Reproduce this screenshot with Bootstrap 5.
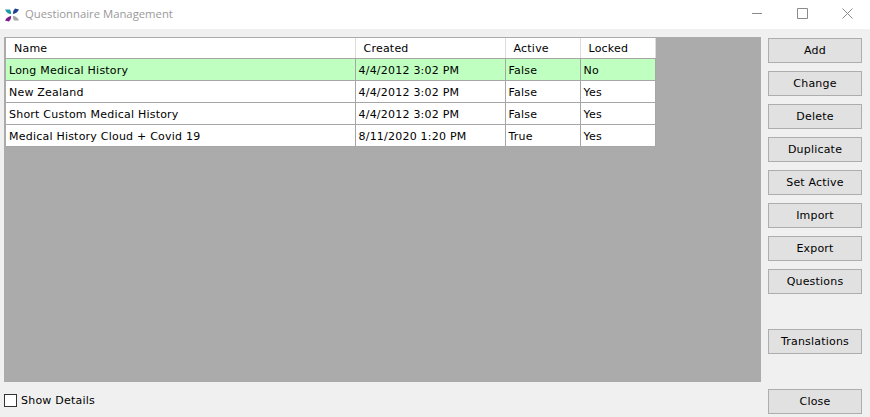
<!DOCTYPE html>
<html lang="en">
<head>
<meta charset="utf-8">
<title>Questionnaire Management</title>
<link href="https://cdn.jsdelivr.net/npm/bootstrap@5.3.0/dist/css/bootstrap.min.css" rel="stylesheet">
<style>
html,body{width:870px;height:417px;overflow:hidden;background:#f0f0f0;margin:0}
body{font-family:"DejaVu Sans",sans-serif;font-size:11px;color:#000;letter-spacing:.22px}
.win-title{height:29px;background:#fff;padding-left:4px}
.win-name{font-family:"Open Sans","Noto Sans",sans-serif;font-size:11.3px;color:#9a9a9a;margin-left:5px;letter-spacing:0}
.win-ctl{width:45px;height:29px;padding-bottom:2px}
.win-body{height:388px;padding:8px 8px 0 4px}
.grid-pane{width:757px;height:345px;flex:none;background:#ababab;padding:1px 0 0 2px}
.q-table{width:649px;table-layout:fixed;border-collapse:collapse;background:#fff;margin:0}
.q-table th,.q-table td{font-weight:400;font-size:11px;line-height:14px;height:22px;padding:3px 0 0 3px;border:1px solid #a6a6a6;border-top:0;border-left:0;vertical-align:middle;color:#000;white-space:nowrap;overflow:hidden;background:#fff}
.q-table th{height:20px;padding-left:8px;padding-top:2px;border-right-color:#ddd}
.q-table tr.picked td{background:#bfffbf}
.side{width:94px;margin-left:7px;margin-top:1px;height:376px}
.tool-btn{display:block;width:94px;height:25px;padding:0;background:#e1e1e1;border:1px solid #adadad;border-radius:0;font-size:11px;line-height:22px;color:#000;font-family:"DejaVu Sans",sans-serif;letter-spacing:.2px}
.foot{height:35px;padding-top:12px}
.tick{width:13px;height:13px;border:1px solid #333;background:#fff;margin-right:4px;flex:none}
.tick-label{line-height:13px}
</style>
</head>
<body>
<div class="win-title d-flex align-items-center">
  <svg width="16" height="16" viewBox="0 0 16 16" aria-hidden="true">
    <path d="M1 2.5 L6 2.5 Q7.5 5 7 7 Q3 7 1 2.5Z" fill="#1b9aa6"/>
    <path d="M15 2.5 L11 1.5 Q8.5 4 8.8 7 Q13 6.5 15 2.5Z" fill="#1f3f8f"/>
    <path d="M1 13.5 L5 14.5 Q7.5 12 7.2 9 Q3 9.5 1 13.5Z" fill="#7a1a8c"/>
    <path d="M15 13.5 L10 13.5 Q8.5 11 9 9 Q13 9 15 13.5Z" fill="#a6a6a6"/>
  </svg>
  <span class="win-name flex-grow-1">Questionnaire Management</span>
  <div class="win-ctl d-flex align-items-center justify-content-center"><svg width="11" height="11" viewBox="0 0 11 11"><path d="M0 5.5H10" stroke="#8a8a8a" fill="none"/></svg></div>
  <div class="win-ctl d-flex align-items-center justify-content-center"><svg width="11" height="11" viewBox="0 0 11 11"><path d="M.5.5h10v10H.5z" stroke="#8a8a8a" fill="none"/></svg></div>
  <div class="win-ctl d-flex align-items-center justify-content-center"><svg width="11" height="11" viewBox="0 0 11 11"><path d="M.5.5l10 10M10.5.5l-10 10" stroke="#8a8a8a" fill="none"/></svg></div>
</div>
<div class="win-body d-flex">
  <div class="d-flex flex-column">
    <div class="grid-pane">
      <table class="q-table">
        <colgroup><col style="width:349px"><col style="width:150px"><col style="width:75px"><col style="width:75px"></colgroup>
        <thead><tr><th>Name</th><th>Created</th><th>Active</th><th>Locked</th></tr></thead>
        <tbody>
          <tr class="picked"><td>Long Medical History</td><td>4/4/2012 3:02 PM</td><td>False</td><td>No</td></tr>
          <tr><td>New Zealand</td><td>4/4/2012 3:02 PM</td><td>False</td><td>Yes</td></tr>
          <tr><td>Short Custom Medical History</td><td>4/4/2012 3:02 PM</td><td>False</td><td>Yes</td></tr>
          <tr><td>Medical History Cloud + Covid 19</td><td>8/11/2020 1:20 PM</td><td>True</td><td>Yes</td></tr>
        </tbody>
      </table>
    </div>
    <div class="foot d-flex align-items-start"><span class="tick"></span><span class="tick-label">Show Details</span></div>
  </div>
  <div class="side d-flex flex-column gap-2">
    <button class="tool-btn" type="button">Add</button>
    <button class="tool-btn" type="button">Change</button>
    <button class="tool-btn" type="button">Delete</button>
    <button class="tool-btn" type="button">Duplicate</button>
    <button class="tool-btn" type="button">Set Active</button>
    <button class="tool-btn" type="button">Import</button>
    <button class="tool-btn" type="button">Export</button>
    <button class="tool-btn" type="button">Questions</button>
    <button class="tool-btn mt-auto" type="button">Translations</button>
    <button class="tool-btn mt-auto" type="button">Close</button>
  </div>
</div>
<script src="https://cdn.jsdelivr.net/npm/bootstrap@5.3.0/dist/js/bootstrap.bundle.min.js"></script>
</body>
</html>
